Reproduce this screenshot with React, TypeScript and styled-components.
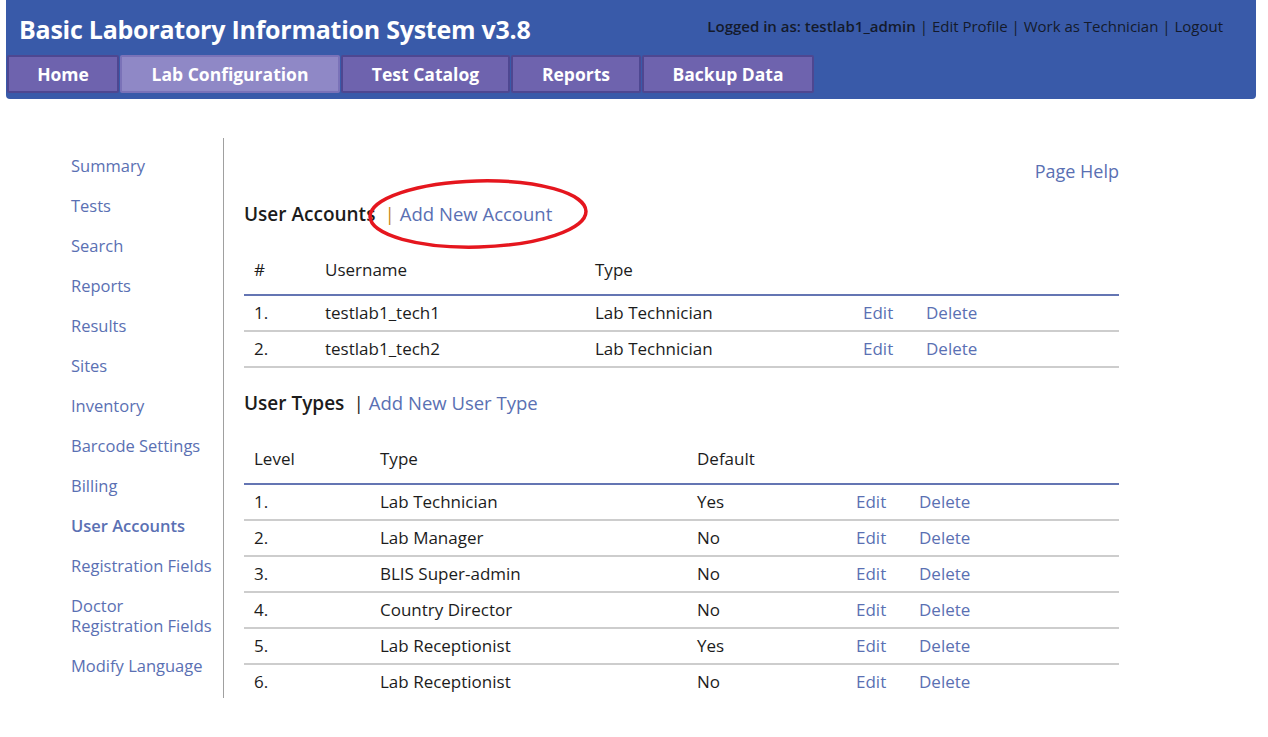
import React from "react";
import styled, { createGlobalStyle } from "styled-components";

const GlobalStyle = createGlobalStyle`
  body {
    margin: 0;
    background: #ffffff;
    font-family: "Open Sans", "DejaVu Sans", sans-serif;
    color: #1c1c1c;
  }
`;

const Page = styled.div`
  width: 1268px;
`;

const Header = styled.header`
  margin: 0 12px 0 6px;
  height: 99px;
  background: #395aa9;
  border-radius: 0 0 4px 4px;
  display: flex;
  flex-direction: column;
`;

const TopRow = styled.div`
  display: flex;
  justify-content: space-between;
  align-items: center;
  height: 55px;
  padding: 0 33px 0 13px;
`;

const Title = styled.h1`
  margin: 0;
  color: #ffffff;
  font-size: 25px;
  font-weight: 700;
  letter-spacing: -0.25px;
  padding-top: 2px;
`;

const UserBar = styled.div`
  font-size: 15px;
  color: #141a2c;
  padding-bottom: 4px;
  b {
    font-weight: 600;
  }
`;

const Tabs = styled.nav`
  display: flex;
  gap: 1px;
  padding-left: 1px;
`;

const Tab = styled.a<{ active?: boolean; w: number }>`
  display: flex;
  align-items: center;
  justify-content: center;
  height: 38px;
  box-sizing: border-box;
  width: ${(p) => p.w}px;
  background: ${(p) => (p.active ? "#8f88c6" : "#6e63ae")};
  border: 2px solid ${(p) => (p.active ? "#7a72b8" : "#4e4791")};
  border-radius: 2px;
  color: #ffffff;
  font-weight: 700;
  font-size: 17.5px;
  padding-bottom: 1px;
  text-decoration: none;
`;

const Body = styled.div`
  display: flex;
  margin-top: 39px;
`;

const Sidebar = styled.ul`
  list-style: none;
  margin: 0;
  padding: 18px 0 0 71px;
  width: 224px;
  height: 560px;
  box-sizing: border-box;
  border-right: 1px solid #a0a0a0;
  display: flex;
  flex-direction: column;
  gap: 20px;
`;

const SideLink = styled.a<{ current?: boolean }>`
  display: block;
  color: #5a70b3;
  font-size: 16.5px;
  line-height: 20px;
  font-weight: ${(p) => (p.current ? 600 : 400)};
  text-decoration: none;
  white-space: nowrap;
`;

const Content = styled.main`
  width: 875px;
  margin-left: 20px;
  position: relative;
`;

const HelpRow = styled.div`
  display: flex;
  justify-content: flex-end;
  margin-top: 21px;
  height: 24px;
  line-height: 24px;
`;

const HelpLink = styled.a`
  font-size: 18px;
  color: #5a70b3;
  text-decoration: none;
`;

const SectionTitle = styled.div<{ gap: number }>`
  margin-top: ${(p) => p.gap}px;
  font-size: 19px;
  line-height: 24px;
  height: 24px;
  display: flex;
  align-items: center;
  position: relative;
  b {
    font-weight: 600;
    color: #1c1c1c;
  }
`;

const Divider = styled.span<{ accent?: boolean }>`
  margin: 0 5px 0 9px;
  color: ${(p) => (p.accent ? "#c88a1a" : "#1c1c1c")};
`;

const AddLink = styled.a`
  font-size: 18.5px;
  color: #5a70b3;
  text-decoration: none;
`;

const Table = styled.table`
  width: 875px;
  table-layout: fixed;
  border-collapse: collapse;
  margin-top: 32px;
  font-size: 17px;
  line-height: 24px;
  th {
    text-align: left;
    font-weight: 400;
    padding: 0 0 12px 10px;
    border-bottom: 2px solid #6475b3;
  }
  td {
    padding: 5px 0 5px 10px;
    border-bottom: 2px solid #cdcdcd;
    white-space: nowrap;
  }
  tbody tr:last-child td {
    border-bottom: none;
  }
`;

const AccountsTable = styled(Table)`
  tbody tr:last-child td {
    border-bottom: 2px solid #cdcdcd;
  }
`;

const Action = styled.a`
  color: #5a70b3;
  text-decoration: none;
`;

const Mark = styled.svg`
  position: absolute;
  left: 122px;
  top: -25px;
  pointer-events: none;
`;

const navTabs = [
  { label: "Home", w: 112 },
  { label: "Lab Configuration", w: 220, active: true },
  { label: "Test Catalog", w: 169 },
  { label: "Reports", w: 130 },
  { label: "Backup Data", w: 172 },
];

const sideItems = [
  "Summary",
  "Tests",
  "Search",
  "Reports",
  "Results",
  "Sites",
  "Inventory",
  "Barcode Settings",
  "Billing",
  "User Accounts",
  "Registration Fields",
  "Doctor\nRegistration Fields",
  "Modify Language",
];

const accounts = [
  ["1.", "testlab1_tech1", "Lab Technician"],
  ["2.", "testlab1_tech2", "Lab Technician"],
];

const userTypes = [
  ["1.", "Lab Technician", "Yes"],
  ["2.", "Lab Manager", "No"],
  ["3.", "BLIS Super-admin", "No"],
  ["4.", "Country Director", "No"],
  ["5.", "Lab Receptionist", "Yes"],
  ["6.", "Lab Receptionist", "No"],
];

const Row = ({ cells }: { cells: string[] }) => (
  <tr>
    {cells.map((c, i) => (
      <td key={i}>{c}</td>
    ))}
    <td>
      <Action>Edit</Action>
    </td>
    <td>
      <Action>Delete</Action>
    </td>
  </tr>
);

export default function App() {
  return (
    <Page>
      <GlobalStyle />
      <Header>
        <TopRow>
          <Title>Basic Laboratory Information System v3.8</Title>
          <UserBar>
            <b>Logged in as: testlab1_admin</b> | Edit Profile | Work as Technician | Logout
          </UserBar>
        </TopRow>
        <Tabs>
          {navTabs.map((t) => (
            <Tab key={t.label} w={t.w} active={t.active}>
              {t.label}
            </Tab>
          ))}
        </Tabs>
      </Header>
      <Body>
        <Sidebar>
          {sideItems.map((s) => (
            <li key={s}>
              <SideLink current={s === "User Accounts"}>
                {s.split("\n").map((line, i) => (
                  <React.Fragment key={i}>
                    {i > 0 && <br />}
                    {line}
                  </React.Fragment>
                ))}
              </SideLink>
            </li>
          ))}
        </Sidebar>
        <Content>
          <HelpRow>
            <HelpLink>Page Help</HelpLink>
          </HelpRow>
          <SectionTitle gap={19}>
            <b>User Accounts</b>
            <Divider accent>|</Divider>
            <AddLink>Add New Account</AddLink>
            <Mark width="224" height="74" viewBox="0 0 224 74">
              <ellipse
                cx="112"
                cy="37"
                rx="108"
                ry="33"
                fill="none"
                stroke="#e5161e"
                strokeWidth="3.5"
                transform="rotate(-1.5 112 37)"
              />
            </Mark>
          </SectionTitle>
          <AccountsTable>
            <colgroup>
              <col style={{ width: 71 }} />
              <col style={{ width: 270 }} />
              <col style={{ width: 268 }} />
              <col style={{ width: 63 }} />
              <col style={{ width: 203 }} />
            </colgroup>
            <thead>
              <tr>
                <th>#</th>
                <th>Username</th>
                <th>Type</th>
                <th></th>
                <th></th>
              </tr>
            </thead>
            <tbody>
              {accounts.map((r) => (
                <Row key={r[0]} cells={r} />
              ))}
            </tbody>
          </AccountsTable>
          <SectionTitle gap={23}>
            <b>User Types</b>
            <Divider>|</Divider>
            <AddLink>Add New User Type</AddLink>
          </SectionTitle>
          <Table>
            <colgroup>
              <col style={{ width: 126 }} />
              <col style={{ width: 317 }} />
              <col style={{ width: 159 }} />
              <col style={{ width: 63 }} />
              <col style={{ width: 210 }} />
            </colgroup>
            <thead>
              <tr>
                <th>Level</th>
                <th>Type</th>
                <th>Default</th>
                <th></th>
                <th></th>
              </tr>
            </thead>
            <tbody>
              {userTypes.map((r) => (
                <Row key={r[0]} cells={r} />
              ))}
            </tbody>
          </Table>
        </Content>
      </Body>
    </Page>
  );
}
